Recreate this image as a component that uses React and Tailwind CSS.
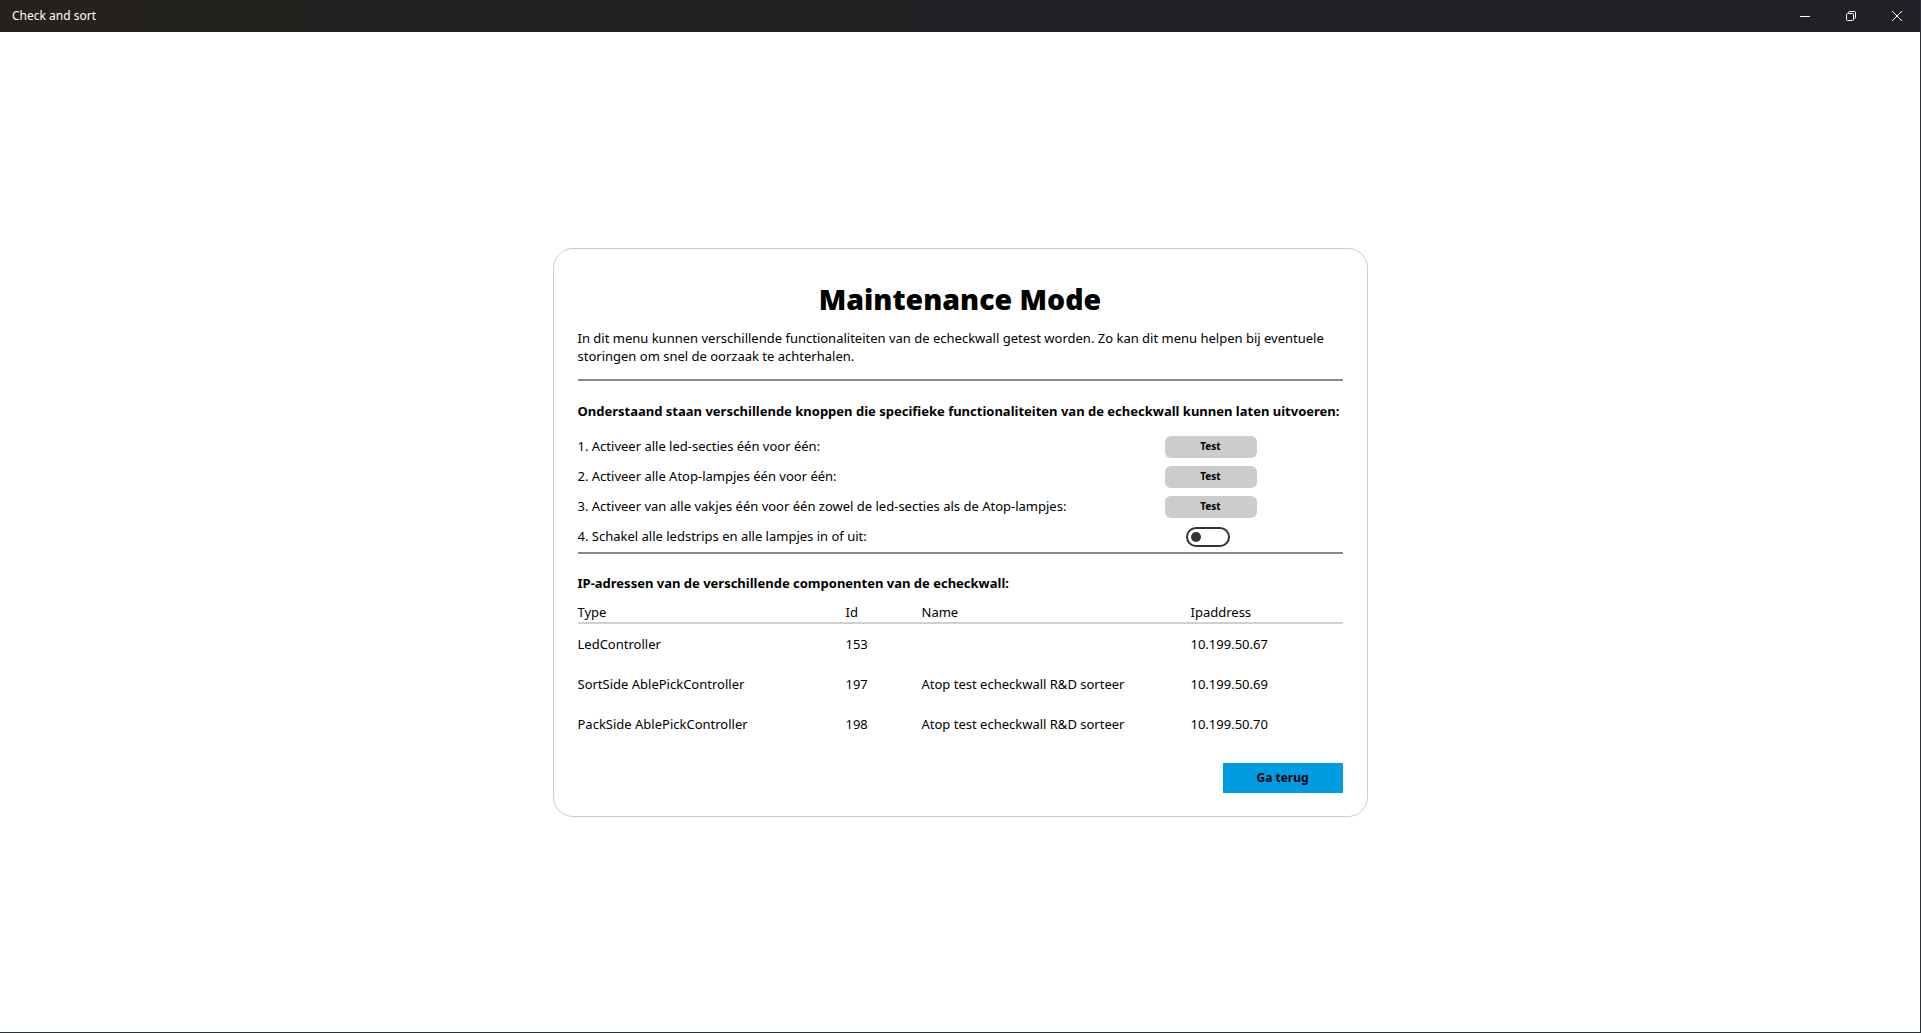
import React from 'react';

const devices = [
    { type: 'LedController', id: '153', name: '', ip: '10.199.50.67' },
    { type: 'SortSide AblePickController', id: '197', name: 'Atop test echeckwall R&D sorteer', ip: '10.199.50.69' },
    { type: 'PackSide AblePickController', id: '198', name: 'Atop test echeckwall R&D sorteer', ip: '10.199.50.70' },
];

function TitleBar() {
    return (
        <div className="h-[32px] flex items-center bg-gradient-to-r from-[#25221d] via-[#202124] to-[#202124] text-white">
            <div className="pl-[12px] text-[12px] flex-1">Check and sort</div>
            <div className="flex h-full">
                <div className="w-[46px] flex items-center justify-center">
                    <svg width="10" height="10" viewBox="0 0 10 10"><path d="M0 5.5h10" stroke="#fff" strokeWidth="1" /></svg>
                </div>
                <div className="w-[46px] flex items-center justify-center">
                    <svg width="10" height="10" viewBox="0 0 10 10" fill="none" stroke="#fff" strokeWidth="1">
                        <rect x="0.5" y="2.5" width="7" height="7" rx="1" />
                        <path d="M2.5 2.5V1.5a1 1 0 0 1 1-1h5a1 1 0 0 1 1 1v5a1 1 0 0 1-1 1h-1" />
                    </svg>
                </div>
                <div className="w-[46px] flex items-center justify-center">
                    <svg width="10" height="10" viewBox="0 0 10 10" stroke="#fff" strokeWidth="1"><path d="M0 0l10 10M10 0L0 10" /></svg>
                </div>
            </div>
        </div>
    );
}

function TestButton() {
    return (
        <button className="w-[92px] h-[22px] rounded-[6px] bg-[#cccccc] text-[10px] font-bold text-black">Test</button>
    );
}

function Toggle() {
    return (
        <div className="ml-[21px] w-[44px] h-[20px] rounded-full border-2 border-[#333333] flex items-center pl-[3px]">
            <div className="w-[10px] h-[10px] rounded-full bg-[#333333]"></div>
        </div>
    );
}

export default function App() {
    const rows = [
        { label: '1. Activeer alle led-secties één voor één:', control: <TestButton /> },
        { label: '2. Activeer alle Atop-lampjes één voor één:', control: <TestButton /> },
        { label: '3. Activeer van alle vakjes één voor één zowel de led-secties als de Atop-lampjes:', control: <TestButton /> },
        { label: '4. Schakel alle ledstrips en alle lampjes in of uit:', control: <Toggle /> },
    ];

    return (
        <div className="h-[1033px] flex flex-col bg-white border-r border-b border-[#2b2f36] text-black" style={{ fontFamily: '"Noto Sans", "Open Sans", sans-serif' }}>
            <TitleBar />
            <div className="flex-1 flex items-center justify-center">
                <div className="w-[815px] border border-[#cccccc] rounded-[20px] px-[24px] pt-[33px] pb-[23px]">
                    <h1 className="text-center text-[28.5px] font-black leading-[34px]">Maintenance Mode</h1>
                    <p className="mt-[13px] text-[13px] leading-[18px]">
                        In dit menu kunnen verschillende functionaliteiten van de echeckwall getest worden. Zo kan dit menu helpen bij eventuele storingen om snel de oorzaak te achterhalen.
                    </p>
                    <div className="mt-[14px] h-[2px] bg-[#888888]"></div>

                    <h2 className="mt-[21px] text-[13px] font-bold leading-[18px]">
                        Onderstaand staan verschillende knoppen die specifieke functionaliteiten van de echeckwall kunnen laten uitvoeren:
                    </h2>
                    <div className="mt-[12px] flex flex-col">
                        {rows.map((row, i) => (
                            <div key={i} className="h-[30px] flex items-center text-[13px]">
                                <div className="w-[587px]">{row.label}</div>
                                <div className="w-[92px] flex">{row.control}</div>
                            </div>
                        ))}
                    </div>
                    <div className="h-[2px] bg-[#888888]"></div>

                    <h2 className="mt-[20px] text-[13px] font-bold leading-[18px]">
                        IP-adressen van de verschillende componenten van de echeckwall:
                    </h2>
                    <div className="mt-[11px] text-[13px]">
                        <div className="grid grid-cols-[268px_76px_269px_1fr] h-[18px] items-center">
                            <div>Type</div>
                            <div>Id</div>
                            <div>Name</div>
                            <div>Ipaddress</div>
                        </div>
                        <div className="mt-[1px] h-[2px] bg-[#d0d0d0]"></div>
                        <div className="mt-[1px]">
                            {devices.map((d) => (
                                <div key={d.id} className="grid grid-cols-[268px_76px_269px_1fr] h-[40px] items-center">
                                    <div>{d.type}</div>
                                    <div>{d.id}</div>
                                    <div>{d.name}</div>
                                    <div>{d.ip}</div>
                                </div>
                            ))}
                        </div>
                    </div>
                    <div className="mt-[18px] flex justify-end">
                        <button className="w-[120px] h-[30px] bg-[#009be0] text-[12px] font-bold text-black">Ga terug</button>
                    </div>
                </div>
            </div>
        </div>
    );
}
